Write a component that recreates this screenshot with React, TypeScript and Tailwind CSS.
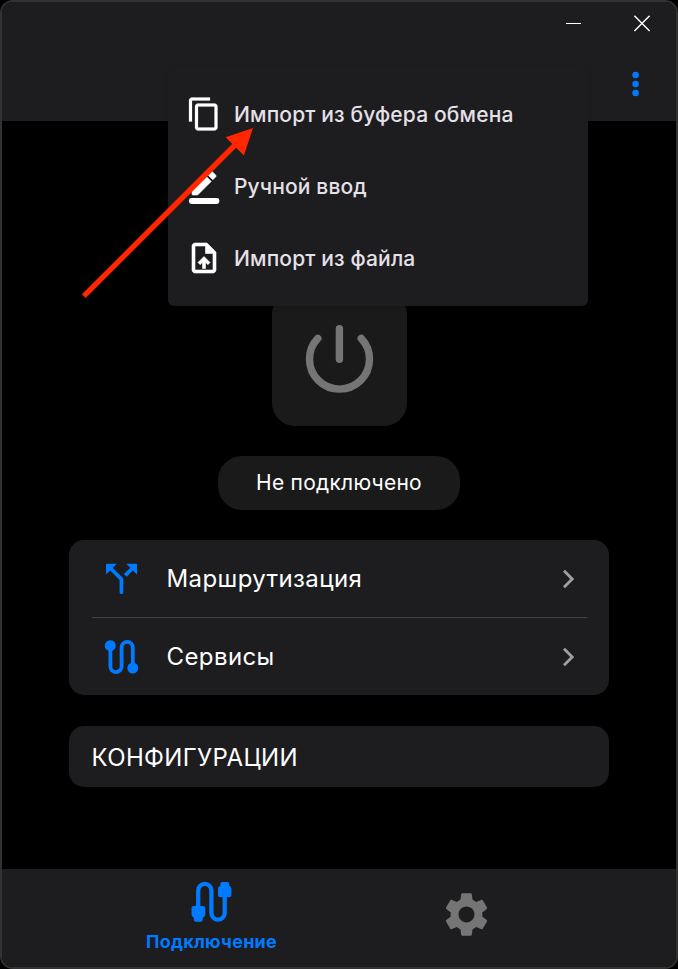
import React from "react";
import { MdSettings } from "react-icons/md";

function CopyIcon() {
  return (
    <svg className="size-9" viewBox="0 0 24 24" fill="currentColor" stroke="currentColor" strokeWidth="0.15">
      <path d="M16 1H4c-1.1 0-2 .9-2 2v14h2V3h12V1zm3 4H8c-1.1 0-2 .9-2 2v14c0 1.1.9 2 2 2h11c1.1 0 2-.9 2-2V7c0-1.1-.9-2-2-2zm0 16H8V7h11v14z" />
    </svg>
  );
}

function FileIcon() {
  return (
    <svg className="size-9" viewBox="0 0 24 24" fill="currentColor" stroke="currentColor" strokeWidth="0.4">
      <path d="M14 2H6c-1.1 0-1.99.9-1.99 2L4 20c0 1.1.89 2 1.99 2H18c1.1 0 2-.9 2-2V8l-6-6zm4 18H6V4h7v5h5v11zM8 15.01l1.41 1.41L11 14.84V19h2v-4.16l1.59 1.59L16 15.01 12.01 11 8 15.01z" />
    </svg>
  );
}

function EditIcon() {
  return (
    <svg className="size-9" viewBox="0 0 24 24" fill="currentColor">
      <rect x="2" y="20" width="20.2" height="4" rx="1.6" />
      <path d="M13.06 5.19l3.75 3.75L7.75 18H4.6a.6.6 0 0 1-.6-.6v-3.15l9.06-9.06zM17.88 7.87l-3.75-3.75 1.83-1.83c.39-.39 1.02-.39 1.41 0l2.34 2.34c.39.39.39 1.02 0 1.41l-1.83 1.83z" stroke="currentColor" strokeWidth="0.4" />
    </svg>
  );
}

function MenuItem({ icon, label }: { icon: React.ReactNode; label: string }) {
  return (
    <button className="flex h-[72px] w-full items-center gap-3 pl-[18px] text-left text-white">
      {icon}
      <span className="whitespace-nowrap pt-0.5 text-[21px] font-medium leading-[30px] tracking-[0.15px] text-[#e6e0e9]">{label}</span>
    </button>
  );
}

function PopupMenu() {
  return (
    <div className="absolute left-[166px] top-16 z-10 h-60 w-[420px] rounded-md bg-[#1d1d1f] py-3 shadow-[0_2px_4px_rgba(0,0,0,0.08)]">
      <MenuItem icon={<CopyIcon />} label="Импорт из буфера обмена" />
      <MenuItem icon={<EditIcon />} label="Ручной ввод" />
      <MenuItem icon={<FileIcon />} label="Импорт из файла" />
    </div>
  );
}

function SplitIcon() {
  return (
    <svg width="36" height="36" viewBox="104 560.5 36 36">
      <g stroke="#007aff" strokeWidth="3.7" fill="none" strokeLinejoin="round">
        <path d="M110 567.3L121.4 578.6V591.7" strokeLinecap="round" />
        <path d="M125.2 574.8L133 567.2" />
      </g>
      <path d="M106 564q0-.7.7-.7H116.8L106 574.1zM137 564q0-.7-.7-.7H126.2L137 574.1z" fill="#007aff" />
    </svg>
  );
}

function RouteIcon() {
  return (
    <svg width="36" height="36" viewBox="104 638.5 36 36" fill="#007aff">
      <path
        d="M110.4 645.5V666a5.6 5.6 0 0 0 11.2 0V647a5.6 5.6 0 0 1 11.2 0V667"
        fill="none"
        stroke="#007aff"
        strokeWidth="3.8"
      />
      <circle cx="110.3" cy="645.2" r="5.5" />
      <circle cx="132.8" cy="667.6" r="5.5" />
    </svg>
  );
}

function CardRow({ icon, label }: { icon: React.ReactNode; label: string }) {
  return (
    <div className="flex h-[77px] items-center">
      <span className="ml-3">{icon}</span>
      <span className="ml-[27px] flex-1 text-2xl tracking-[0.4px] text-white">{label}</span>
      <svg className="mr-[7px]" width="20" height="24" viewBox="0 0 20 24" fill="none" stroke="#a0a0a0" strokeWidth="2.8">
        <path d="M4 3.8L12.2 12 4 20.2" />
      </svg>
    </div>
  );
}

function CableIcon() {
  return (
    <svg width="44" height="44" viewBox="190 880 44 44" fill="#007aff">
      <path
        d="M198.2 910V890.4a6.6 6.6 0 0 1 13.2 0V913a6.65 6.65 0 0 0 13.3 0V892"
        fill="none"
        stroke="#007aff"
        strokeWidth="4.3"
      />
      <path d="M193.9 906h9.2a2.2 2.2 0 0 1 2.2 2.2v6.2q0 1.4-1.2 2.4l-1.4 1.2v1.7a2 2 0 0 1-2 2h-4.8a2 2 0 0 1-2-2V918l-1.2-1.2q-1.2-1-1.2-2.4v-6.2a2.2 2.2 0 0 1 2.4-2.2z" />
      <path d="M220.2 897.2h9a2.2 2.2 0 0 0 2.2-2.2v-6.2q0-1.4-1.2-2.4l-1-1V884a2 2 0 0 0-2-2h-4.8a2 2 0 0 0-2 2v1.4l-1.2 1q-1.2 1-1.2 2.4v6.2a2.2 2.2 0 0 0 2.2 2.2z" />
    </svg>
  );
}

export default function App() {
  return (
    <div className="h-[969px] w-full bg-black font-['Inter',sans-serif]">
      <div className="relative flex h-full flex-col overflow-hidden rounded-[13px] border-2 border-[#323233] bg-black">
        <header className="h-[119px] shrink-0 bg-[#1d1d1f]">
          <div className="flex h-[44px] items-center justify-end gap-12 pr-[24px] text-white">
            <svg width="20" height="20" viewBox="0 0 20 20" stroke="currentColor" strokeWidth="1">
              <path d="M2 9.5h15" />
            </svg>
            <svg width="20" height="20" viewBox="0 0 20 20" stroke="currentColor" strokeWidth="1.4">
              <path d="M2.4 1.8L17.6 17M17.6 1.8L2.4 17" />
            </svg>
          </div>
          <div className="flex h-[75px] flex-col items-end justify-center pr-9">
            <svg width="8" height="26" viewBox="0 0 8 26" fill="#007aff">
              <circle cx="3.6" cy="4" r="3.3" />
              <circle cx="3.6" cy="13" r="3.3" />
              <circle cx="3.6" cy="22" r="3.3" />
            </svg>
          </div>
        </header>

        <PopupMenu />

        <main className="flex flex-1 flex-col items-center pt-[170px]">
          <button className="flex size-[135px] shrink-0 items-center justify-center rounded-[23px] bg-[#1a1a1a]">
            <svg width="80" height="80" viewBox="299 319 80 80" fill="none" stroke="#757575" strokeWidth="7.4" strokeLinecap="round">
              <path d="M339.4 328.7V359.3" />
              <path d="M317.8 338.4A30 30 0 1 0 361.2 338.4" />
            </svg>
          </button>
          <div className="mt-[30px] flex h-[54px] w-[242px] shrink-0 items-center justify-center rounded-3xl bg-[#1a1a1a] text-[21px] tracking-[0.25px] text-white">
            Не подключено
          </div>
          <section className="mt-[30px] h-[155px] w-[540px] shrink-0 rounded-[15px] bg-[#1d1d1f] px-[22.5px]">
            <CardRow icon={<SplitIcon />} label="Маршрутизация" />
            <div className="h-px bg-[#414143]" />
            <CardRow icon={<RouteIcon />} label="Сервисы" />
          </section>
          <section className="mt-[31px] flex h-[61px] w-[540px] shrink-0 items-center rounded-[15px] bg-[#1d1d1f] px-[22.5px] pt-[3px] text-2xl tracking-[0.37px] text-white">
            КОНФИГУРАЦИИ
          </section>
        </main>

        <nav className="flex h-[98px] shrink-0 justify-center bg-[#1d1d1f]">
          <button className="flex w-[255px] flex-col items-center pt-[11px] text-lg font-bold leading-6 text-[#007aff]">
            <CableIcon />
            <span className="mt-1.5 whitespace-nowrap tracking-[0.25px]">Подключение</span>
          </button>
          <button className="flex w-[255px] items-start justify-center pt-[19px] text-[#757575]">
            <MdSettings className="size-[53px]" />
          </button>
        </nav>

        <svg className="absolute left-[78px] top-[118px] z-20" width="180" height="190" viewBox="80 120 180 190">
          <path d="M83.8 296.2L236 144" stroke="#ff2600" strokeWidth="5.4" />
          <path d="M253 128L225.6 137.2L243.9 155.5z" fill="#ff2600" />
        </svg>
      </div>
    </div>
  );
}
